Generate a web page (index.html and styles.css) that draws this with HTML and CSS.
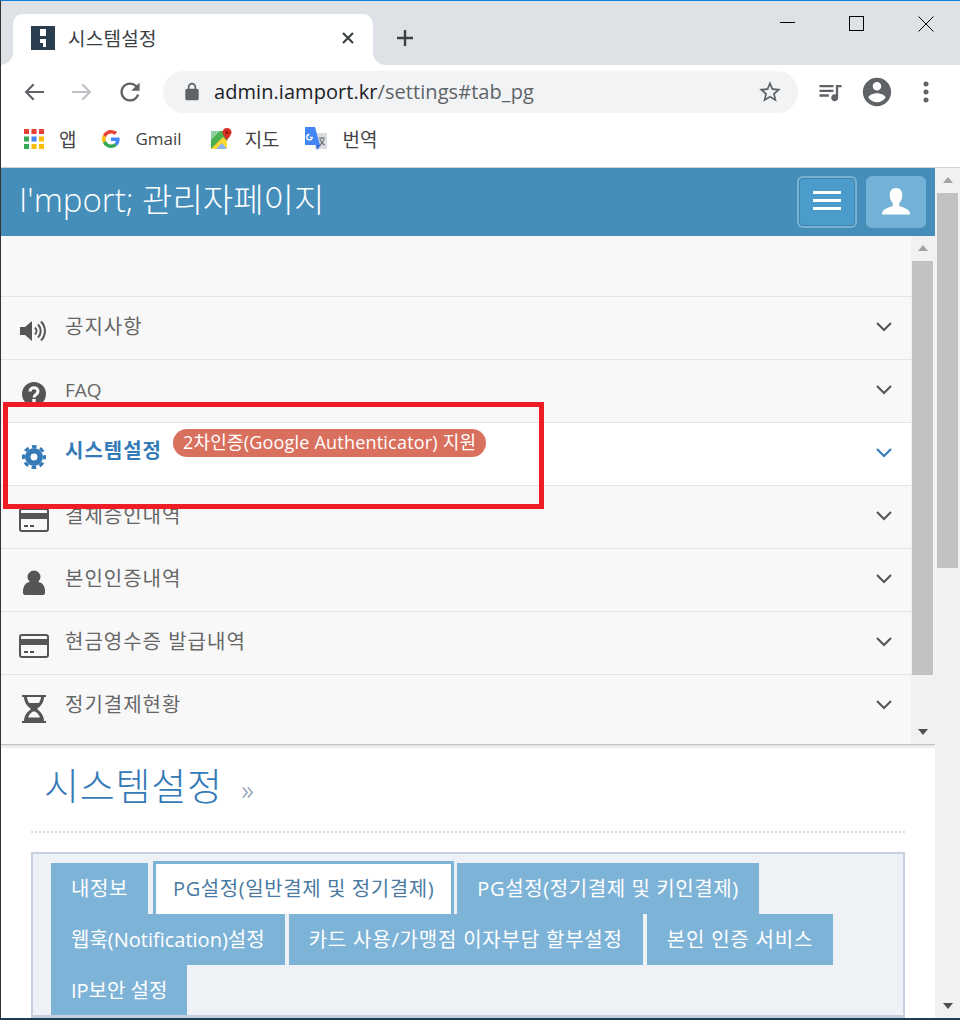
FILE: index.html
```html
<!DOCTYPE html>
<html lang="ko">
  <head>
    <meta charset="UTF-8" />
    <title>시스템설정</title>
    <link rel="stylesheet" href="styles.css">
  </head>
  <body>
    <div class="window">
      <!-- browser chrome -->
      <div class="tabstrip">
        <div class="tab">
          <svg class="favicon" width="24" height="24" viewBox="0 0 24 24"><rect width="24" height="24" fill="#2b3e50"/><rect x="9" y="3" width="6" height="7" fill="#fff"/><path d="M9 13h6v8h-3v-4H9z" fill="#fff"/></svg>
          <span class="tab-title">시스템설정</span>
          <svg class="tab-close" width="14" height="14" viewBox="0 0 14 14"><path d="M2 2l10 10M12 2L2 12" stroke="#3c4043" stroke-width="2.2"/></svg>
        </div>
        <svg class="new-tab" width="20" height="20" viewBox="0 0 20 20"><path d="M10 2v16M2 10h16" stroke="#3c4043" stroke-width="2.4"/></svg>
        <div class="win-controls">
          <svg width="16" height="16" viewBox="0 0 16 16"><path d="M0 6.5h15" stroke="#000"/></svg>
          <svg width="16" height="16" viewBox="0 0 16 16"><rect x="0.5" y="0.5" width="14" height="14" fill="none" stroke="#000"/></svg>
          <svg width="16" height="16" viewBox="0 0 16 16"><path d="M0.5 0.5l15 15M15.5 0.5l-15 15" stroke="#000"/></svg>
        </div>
      </div>

      <div class="toolbar">
        <svg class="nav-icon" width="24" height="24" viewBox="0 0 24 24"><path fill="#5f6368" d="M22 11H6.500l6-6L11 3.600 2.600 12 11 20.400 12.500 19l-6-6H22z"/></svg>
        <svg class="nav-icon" width="24" height="24" viewBox="0 0 24 24"><path fill="#bdc1c6" d="M2 11h15.500l-6-6L13 3.600 21.400 12 13 20.400 11.500 19l6-6H2z"/></svg>
        <svg class="nav-icon" width="24" height="24" viewBox="0 0 24 24"><path fill="#5f6368" d="M17.650 6.350C16.200 4.900 14.210 4 12 4c-4.420 0-7.990 3.580-7.990 8s3.570 8 7.990 8c3.730 0 6.840-2.550 7.730-6h-2.080c-.82 2.330-3.040 4-5.650 4-3.310 0-6-2.690-6-6s2.690-6 6-6c1.660 0 3.140.69 4.220 1.780L13 11h7V4l-2.350 2.350z" transform="translate(-2.400 -2.400) scale(1.200)"/></svg>
        <div class="omnibox">
          <svg class="lock" width="20" height="20" viewBox="0 0 24 24"><path fill="#5f6368" d="M18 8h-1V6c0-2.760-2.240-5-5-5S7 3.240 7 6v2H6c-1.100 0-2 .9-2 2v10c0 1.100.9 2 2 2h12c1.100 0 2-.9 2-2V10c0-1.100-.9-2-2-2zM9 8V6c0-1.660 1.340-3 3-3s3 1.340 3 3v2H9z"/></svg>
          <span class="url">admin.iamport.kr<span class="url-path">/settings#tab_pg</span></span>
          <svg class="star" width="26" height="26" viewBox="0 0 24 24"><path fill="#5f6368" d="M22 9.240l-7.190-.62L12 2 9.190 8.630 2 9.240l5.460 4.730L5.820 21 12 17.270 18.180 21l-1.630-7.030L22 9.240zM12 15.400l-3.760 2.270 1-4.280-3.320-2.880 4.380-.38L12 6.100l1.710 4.040 4.380.38-3.320 2.880 1 4.280L12 15.400z"/></svg>
        </div>
        <svg class="tool-queue" width="28" height="28" viewBox="0 0 24 24"><path fill="#5f6368" d="M15 6H3v2h12V6zm0 4H3v2h12v-2zM3 16h8v-2H3v2zM17 6v8.180c-.31-.11-.65-.18-1-.18-1.660 0-3 1.340-3 3s1.340 3 3 3 3-1.340 3-3V8h3V6h-5z"/></svg>
        <svg class="tool-avatar" width="34" height="34" viewBox="0 0 24 24"><path fill="#5f6368" d="M12 2C6.480 2 2 6.480 2 12s4.480 10 10 10 10-4.480 10-10S17.520 2 12 2zm0 3c1.660 0 3 1.340 3 3s-1.340 3-3 3-3-1.340-3-3 1.340-3 3-3zm0 14.200c-2.500 0-4.710-1.280-6-3.220.03-1.990 4-3.080 6-3.080 1.990 0 5.970 1.090 6 3.080-1.290 1.940-3.500 3.220-6 3.220z"/></svg>
        <svg class="tool-dots" width="6" height="24" viewBox="0 0 6 24"><circle cx="3" cy="4" r="2.500" fill="#5f6368"/><circle cx="3" cy="12" r="2.500" fill="#5f6368"/><circle cx="3" cy="20" r="2.500" fill="#5f6368"/></svg>
      </div>

      <div class="bookmarks">
        <div class="bookmark">
          <svg width="20" height="20" viewBox="0 0 20 20">
            <rect width="5" height="5" fill="#ea4335"/><rect x="7.500" width="5" height="5" fill="#ea4335"/><rect x="15" width="5" height="5" fill="#ea4335"/>
            <rect y="7.500" width="5" height="5" fill="#34a853"/><rect x="7.500" y="7.500" width="5" height="5" fill="#4285f4"/><rect x="15" y="7.500" width="5" height="5" fill="#fbbc05"/>
            <rect y="15" width="5" height="5" fill="#34a853"/><rect x="7.500" y="15" width="5" height="5" fill="#fbbc05"/><rect x="15" y="15" width="5" height="5" fill="#fbbc05"/>
          </svg>
          <span>앱</span>
        </div>
        <div class="bookmark">
          <svg width="18" height="18" viewBox="0 0 48 48">
            <path fill="#EA4335" d="M24 9.500c3.540 0 6.710 1.220 9.210 3.600l6.850-6.850C35.900 2.380 30.470 0 24 0 14.620 0 6.510 5.380 2.560 13.220l7.980 6.190C12.430 13.720 17.740 9.500 24 9.500z"/>
            <path fill="#4285F4" d="M46.980 24.550c0-1.570-.15-3.090-.38-4.550H24v9.020h12.940c-.58 2.960-2.260 5.480-4.780 7.180l7.730 6c4.510-4.180 7.090-10.360 7.090-17.650z"/>
            <path fill="#FBBC05" d="M10.530 28.590c-.48-1.450-.76-2.990-.76-4.590s.27-3.140.76-4.590l-7.980-6.190C.92 16.460 0 20.120 0 24c0 3.880.92 7.540 2.560 10.780l7.970-6.190z"/>
            <path fill="#34A853" d="M24 48c6.480 0 11.930-2.130 15.890-5.810l-7.730-6c-2.150 1.450-4.920 2.300-8.160 2.300-6.260 0-11.570-4.220-13.470-9.910l-7.980 6.190C6.510 42.620 14.620 48 24 48z"/>
          </svg>
          <span class="bm-gmail">Gmail</span>
        </div>
        <div class="bookmark bookmark-maps">
          <svg width="22" height="22" viewBox="0 0 22 22">
            <path d="M1 3h16v18H1z" fill="#4caf50"/>
            <path d="M1 21L13 9l4 4v8z" fill="#fdd835"/>
            <path d="M6 21l6-6 5 6z" fill="#8ab4f8"/>
            <path d="M1 3h9L1 12z" fill="#8fd0a0"/>
            <path d="M17 0c-2.800 0-4.500 2-4.500 4.300C12.500 7.300 17 12 17 12s4.500-4.700 4.500-7.700C21.500 2 19.800 0 17 0z" fill="#d93025"/>
            <circle cx="17" cy="4.500" r="1.500" fill="#8c1a11"/>
          </svg>
          <span>지도</span>
        </div>
        <div class="bookmark">
          <svg width="24" height="24" viewBox="0 0 24 24">
            <path d="M10 6h13v16H11z" fill="#dadce0"/>
            <path d="M1 0h10l5 18H1z" fill="#4285f4"/>
            <path d="M12 18h5l-4 5z" fill="#3367d6"/>
            <path d="M5.500 7.500a2.700 2.700 0 1 0 2.700 2.900H5.800" fill="none" stroke="#fff" stroke-width="1.400"/>
            <path d="M15 11h6M18 10v2M16 12c.8 3 2.500 5 4.800 6M20 12c-.6 2.500-2 4.500-4 6" fill="none" stroke="#70757a" stroke-width="1.100"/>
          </svg>
          <span>번역</span>
        </div>
      </div>

      <!-- site -->
      <div class="viewport">
        <div class="page">
          <header class="site-header">
            <span class="brand">I'mport; 관리자페이지</span>
            <button class="head-btn head-btn-menu"><span></span><span></span><span></span></button>
            <button class="head-btn head-btn-user">
              <svg width="30" height="30" viewBox="0 0 30 30"><path fill="#fff" d="M15 1c-4.300 0-6.300 3.200-6.300 7.300 0 3.300 1.300 6 3 7.700v3c-3.200 1.300-9 2.800-10.200 5.700-.3.800-.5 2-.5 2.800h28c0-.8-.2-2-.5-2.800-1.200-2.900-7-4.400-10.200-5.700v-3c1.700-1.700 3-4.400 3-7.700C21.300 4.200 19.300 1 15 1z"/></svg>
            </button>
          </header>

          <div class="sidebar-wrap">
            <nav class="sidebar">
              <div class="menu-row">
                <svg class="menu-icon" width="30" height="26" viewBox="0 0 30 26"><path fill="#555" d="M1 9h5l7-6v20l-7-6H1z"/><path d="M16 9.500c2 2 2 5 0 7M19 6.500c3.600 3.600 3.600 9.400 0 13M22 3.500c5.200 5.200 5.200 13.800 0 19" fill="none" stroke="#555" stroke-width="2"/></svg>
                <span class="menu-label">공지사항</span>
                <svg class="chevron" width="18" height="12" viewBox="0 0 18 12"><path d="M2 2l7 7 7-7" fill="none" stroke="#555" stroke-width="2"/></svg>
              </div>
              <div class="menu-row">
                <svg class="menu-icon" width="30" height="26" viewBox="0 0 30 26"><circle cx="15" cy="13" r="12" fill="#555"/><path d="M11 10.500c0-5 8-5 8 0 0 3-4 3-4 6" fill="none" stroke="#f8f8f8" stroke-width="3"/><rect x="13.300" y="18" width="3.400" height="3.400" fill="#f8f8f8"/></svg>
                <span class="menu-label menu-label-latin">FAQ</span>
                <svg class="chevron" width="18" height="12" viewBox="0 0 18 12"><path d="M2 2l7 7 7-7" fill="none" stroke="#555" stroke-width="2"/></svg>
              </div>
              <div class="menu-row menu-row-active">
                <svg class="menu-icon" width="30" height="26" viewBox="0 0 30 26"><circle cx="15" cy="13" r="10.500" fill="none" stroke="#337ab7" stroke-width="3" stroke-dasharray="4.700 3.550" stroke-dashoffset="2.350"/><circle cx="15" cy="13" r="6.200" fill="none" stroke="#337ab7" stroke-width="5.500"/></svg>
                <span class="menu-label">시스템설정</span>
                <span class="menu-badge">2차인증(Google Authenticator) 지원</span>
                <svg class="chevron" width="18" height="12" viewBox="0 0 18 12"><path d="M2 2l7 7 7-7" fill="none" stroke="#337ab7" stroke-width="2"/></svg>
              </div>
              <div class="menu-row">
                <svg class="menu-icon" width="30" height="26" viewBox="0 0 30 26"><rect x="1" y="2" width="28" height="22" rx="2" fill="none" stroke="#555" stroke-width="2"/><rect x="1" y="6" width="28" height="6" fill="#555"/><path d="M5 19h4M11 19h4" stroke="#555" stroke-width="2"/></svg>
                <span class="menu-label">결제승인내역</span>
                <svg class="chevron" width="18" height="12" viewBox="0 0 18 12"><path d="M2 2l7 7 7-7" fill="none" stroke="#555" stroke-width="2"/></svg>
              </div>
              <div class="menu-row">
                <svg class="menu-icon" width="30" height="26" viewBox="0 0 30 26"><circle cx="15" cy="7" r="6.500" fill="#555"/><path d="M4 21c0-5 3-9 7-9h8c4 0 7 4 7 9v2c0 1-1 2-2 2H6c-1 0-2-1-2-2z" fill="#555"/></svg>
                <span class="menu-label">본인인증내역</span>
                <svg class="chevron" width="18" height="12" viewBox="0 0 18 12"><path d="M2 2l7 7 7-7" fill="none" stroke="#555" stroke-width="2"/></svg>
              </div>
              <div class="menu-row">
                <svg class="menu-icon" width="30" height="26" viewBox="0 0 30 26"><rect x="1" y="2" width="28" height="22" rx="2" fill="none" stroke="#555" stroke-width="2"/><rect x="1" y="6" width="28" height="6" fill="#555"/><path d="M5 19h4M11 19h4" stroke="#555" stroke-width="2"/></svg>
                <span class="menu-label">현금영수증 발급내역</span>
                <svg class="chevron" width="18" height="12" viewBox="0 0 18 12"><path d="M2 2l7 7 7-7" fill="none" stroke="#555" stroke-width="2"/></svg>
              </div>
              <div class="menu-row">
                <svg class="menu-icon" width="30" height="28" viewBox="0 0 30 28"><path fill="#555" d="M3 0h24v2h-2c0 5-3 9-7 12 4 3 7 7 7 12h2v2H3v-2h2c0-5 3-9 7-12-4-3-7-7-7-12H3z"/><path fill="#f8f8f8" d="M8 2h14c0 2-1 4-2 6H10C9 6 8 4 8 2zM14 16.500h2c2 1 4 3 5 6H9c1-3 3-5 5-6z"/></svg>
                <span class="menu-label">정기결제현황</span>
                <svg class="chevron" width="18" height="12" viewBox="0 0 18 12"><path d="M2 2l7 7 7-7" fill="none" stroke="#555" stroke-width="2"/></svg>
              </div>
            </nav>
            <div class="scrollbar scrollbar-inner">
              <i class="arrow-up"></i>
              <div class="thumb"></div>
              <i class="arrow-down"></i>
            </div>
          </div>

          <main class="content">
            <h2 class="page-title">시스템설정 <small>»</small></h2>
            <div class="dotted"></div>
            <div class="panel">
              <ul class="tabs">
                <li class="tab-tight">내정보</li>
                <li class="tab-tight active">PG설정(일반결제 및 정기결제)</li>
                <li class="tab-tight">PG설정(정기결제 및 키인결제)</li>
                <li class="tab-latin">웹훅(Notification)설정</li>
                <li>카드 사용/가맹점 이자부담 할부설정</li>
                <li>본인 인증 서비스</li>
                <li class="tab-latin">IP보안 설정</li>
              </ul>
            </div>
          </main>

          <div class="annotation"></div>
        </div>
        <div class="scrollbar scrollbar-outer">
          <i class="arrow-up"></i>
          <div class="thumb"></div>
          <i class="arrow-down"></i>
        </div>
      </div>
    </div>
  </body>
</html>
```

FILE: styles.css
```css
* {
  box-sizing: border-box;
}

html,
body {
  margin: 0;
  padding: 0;
  background: #fff;
}

body {
  width: 960px;
  height: 1020px;
  overflow: hidden;
  font-family: "Open Sans", "Noto Sans CJK KR", sans-serif;
}

.window {
  display: flex;
  flex-direction: column;
  height: 1020px;
  border-top: 1px solid #0f82d8;
  border-left: 1px solid #333;
  border-bottom: 2px solid #1f3d50;
  overflow: hidden;
}

/* browser chrome */
.tabstrip {
  display: flex;
  align-items: flex-end;
  flex: none;
  height: 64px;
  padding-left: 12px;
  background: #dee1e6;
}

.tab {
  position: relative;
  display: flex;
  align-items: center;
  width: 360px;
  height: 51px;
  padding: 0 17px 4px 18px;
  background: #fff;
  border-radius: 10px 10px 0 0;
}

.tab::before,
.tab::after {
  content: "";
  position: absolute;
  bottom: 0;
  width: 12px;
  height: 12px;
}

.tab::before {
  left: -12px;
  background: radial-gradient(circle at 0 0, #dee1e6 11.500px, #fff 12px);
}

.tab::after {
  right: -12px;
  background: radial-gradient(circle at 100% 0, #dee1e6 11.500px, #fff 12px);
}

.tab-title {
  margin-left: 13px;
  font-size: 19px;
  letter-spacing: 0.3px;
  color: #3c4043;
}

.tab-close {
  margin-left: auto;
  margin-right: 1px;
}

.new-tab {
  margin: 0 0 17px 22px;
}

.win-controls {
  display: flex;
  gap: 53px;
  margin-left: auto;
  padding-right: 26px;
  align-self: flex-start;
  margin-top: 15px;
}

.toolbar {
  display: flex;
  align-items: center;
  flex: none;
  height: 57px;
  background: #fff;
  padding: 0 0 4px 21px;
}

.nav-icon {
  margin-right: 24px;
}

.nav-icon:nth-child(3) {
  margin-right: 21px;
}

.omnibox {
  display: flex;
  align-items: center;
  width: 635px;
  height: 42px;
  padding: 0 15px 0 19px;
  background: #f1f3f4;
  border-radius: 21px;
}

.url {
  margin-left: 12px;
  font-family: "Open Sans", sans-serif;
  font-size: 20px;
  letter-spacing: 0.06px;
  color: #202124;
}

.url-path {
  color: #5f6368;
}

.star {
  margin-left: auto;
}

.tool-queue {
  margin-left: 18px;
}

.tool-avatar {
  margin-left: 16px;
}

.tool-dots {
  margin-left: 29px;
}

.bookmarks {
  display: flex;
  align-items: center;
  gap: 26px;
  flex: none;
  height: 46px;
  padding: 0 0 12px 23px;
  background: #fff;
  border-bottom: 1px solid #d0d3d6;
}

.bookmark {
  display: flex;
  align-items: center;
  gap: 15px;
  font-size: 19px;
  color: #444;
}

.bookmark-maps {
  gap: 13px;
  margin: 0 -2px 0 2px;
}

.bm-gmail {
  font-size: 17px;
}

/* site */
.viewport {
  display: flex;
  flex: 1;
  min-height: 0;
}

.page {
  position: relative;
  width: 934px;
  overflow: hidden;
  background: #fff;
}

.site-header {
  display: flex;
  align-items: center;
  height: 68px;
  padding: 0 9px 0 18px;
  background: #458eba;
}

.brand {
  margin-right: auto;
  margin-bottom: 8px;
  font-size: 33px;
  font-weight: 300;
  color: #fff;
}

.head-btn {
  display: flex;
  flex-direction: column;
  align-items: center;
  justify-content: center;
  width: 60px;
  height: 52px;
  padding: 0;
  border: 0;
  border-radius: 6px;
}

.head-btn-menu {
  gap: 5px;
  margin-right: 9px;
  padding-bottom: 4px;
  background: #4b9bcb;
  border: 2px solid #79b1d4;
  box-shadow: inset 0 0 0 1px #3f82ab;
}

.head-btn-menu span {
  width: 28px;
  height: 3px;
  background: #fff;
}

.head-btn-user {
  background: #74b1d6;
}

.sidebar-wrap {
  display: flex;
  height: 509px;
  border-bottom: 1px solid #c4c4c4;
  box-shadow: 0 2px 3px rgba(0, 0, 0, 0.12);
}

.sidebar {
  width: 910px;
  padding-top: 60px;
  overflow: hidden;
  background: #f8f8f8;
}

.menu-row {
  display: flex;
  align-items: center;
  height: 63px;
  padding: 0 18px;
  border-top: 1px solid #e4e4e4;
}

.menu-row-active {
  background: #fff;
}

.menu-icon {
  flex: none;
  margin-top: 5px;
}

.menu-label {
  margin-left: 16px;
  margin-bottom: 6px;
  font-size: 20px;
  letter-spacing: 1px;
  color: #666;
}

.menu-label-latin {
  margin-bottom: 2px;
  font-size: 19px;
  letter-spacing: 0;
}

.menu-row-active .menu-label {
  margin-bottom: 10px;
  font-weight: 700;
  letter-spacing: 1px;
  color: #337ab7;
}

.menu-badge {
  margin-left: 11px;
  margin-bottom: 22px;
  padding: 0 10px;
  height: 28px;
  line-height: 26px;
  font-size: 18px;
  letter-spacing: 0.2px;
  color: #fff;
  background: #d9705e;
  border-radius: 14px;
}

.chevron {
  margin-left: auto;
  margin-bottom: 3px;
}

.scrollbar {
  position: relative;
  flex: none;
  background: #f1f1f1;
}

.scrollbar-inner {
  width: 24px;
}

.scrollbar-outer {
  width: 25px;
}

.thumb {
  position: absolute;
  background: #c1c1c1;
}

.scrollbar-inner .thumb {
  top: 25px;
  left: 1px;
  right: 2px;
  height: 414px;
}

.scrollbar-outer .thumb {
  top: 25px;
  left: 2px;
  right: 2px;
  height: 375px;
}

.arrow-up,
.arrow-down {
  position: absolute;
  left: 50%;
  margin-left: -5px;
  border-left: 5px solid transparent;
  border-right: 5px solid transparent;
}

.arrow-up {
  top: 9px;
  border-bottom: 6px solid #a3a3a3;
}

.arrow-down {
  bottom: 9px;
  border-top: 6px solid #505050;
}

.content {
  padding: 14px 30px 0;
}

.page-title {
  height: 52px;
  margin: 0 0 0 13px;
  font-size: 38px;
  font-weight: 300;
  letter-spacing: 0.8px;
  line-height: 52px;
  color: #337ab7;
}

.page-title small {
  margin-left: 8px;
  font-size: 28px;
  font-weight: 300;
  color: #7f93a8;
}

.dotted {
  margin-top: 20px;
  border-top: 2px dotted #ddd;
}

.panel {
  margin-top: 19px;
  height: 300px;
  border: 2px solid #c5d0e0;
  background: #fff;
}

.tabs {
  display: flex;
  flex-wrap: wrap;
  margin: 0;
  padding: 9px 18px 0;
  list-style: none;
  background: #eef1f6;
  border-bottom: 3px solid #c5d0e0;
}

.tabs li {
  height: 51px;
  margin-right: 4px;
  padding: 0 20px;
  line-height: 51px;
  font-size: 20px;
  letter-spacing: 0.8px;
  color: #fff;
  background: #7eb3d8;
}

.tabs li.tab-tight {
  letter-spacing: 0.6px;
}

.tabs li.tab-latin {
  letter-spacing: 0;
}

.tabs li:last-child {
  height: 50px;
}

.tabs li.active {
  height: 53px;
  margin: -2px 3px 0 1px;
  padding: 0 17px;
  line-height: 50px;
  color: #4a7a9f;
  background: #fff;
  border: 3px solid #7eb3d8;
  border-bottom: 0;
}

/* screenshot annotation, drawn over the menu */
.annotation {
  position: absolute;
  left: 2px;
  top: 234px;
  width: 541px;
  height: 107px;
  border: 5px solid #ee1c25;
}
```
